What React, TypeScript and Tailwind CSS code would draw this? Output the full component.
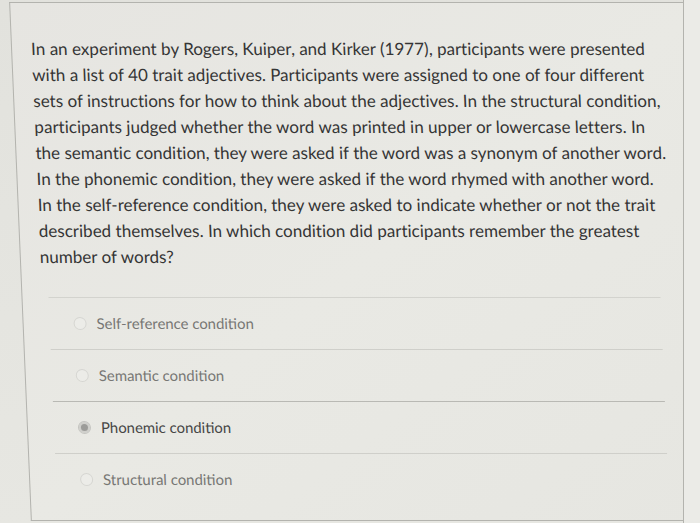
import React from "react";

const lines = [
  "In an experiment by Rogers, Kuiper, and Kirker (1977), participants were presented",
  "with a list of 40 trait adjectives. Participants were assigned to one of four different",
  "sets of instructions for how to think about the adjectives. In the structural condition,",
  "participants judged whether the word was printed in upper or lowercase letters. In",
  "the semantic condition, they were asked if the word was a synonym of another word.",
  "In the phonemic condition, they were asked if the word rhymed with another word.",
  "In the self-reference condition, they were asked to indicate whether or not the trait",
  "described themselves. In which condition did participants remember the greatest",
  "number of words?",
];

const options = [
  { label: "Self-reference condition", selected: false, line: "border-[#d3d3ce]" },
  { label: "Semantic condition", selected: false, line: "border-[#cfcfca]" },
  { label: "Phonemic condition", selected: true, line: "border-[#b9b9b4]" },
  { label: "Structural condition", selected: false, line: "border-[#cfcfca]" },
];

export default function App() {
  return (
    <div
      className="w-[700px] h-[523px] flex bg-[#e4e4df] overflow-hidden"
      style={{ fontFamily: "Lato, 'Open Sans', sans-serif" }}
    >
      <div className="flex-1 relative overflow-hidden bg-gradient-to-b from-[#e2e2dd] to-[#e7e7e2]">
        <div className="mt-[2px] ml-[20px] h-[519px] w-[700px] border-t border-l border-b border-[#b3b3ae] bg-gradient-to-br from-[#e6e5e1] via-[#e9e9e4] to-[#e6e6e1] skew-x-[2.4deg] pt-[33px]">
          <div className="pl-[19px] text-[17px] leading-[26px] text-[#353535] tracking-[0.02px]">
            {lines.map((l, i) => (
              <div key={i} className="whitespace-nowrap">
                {l}
              </div>
            ))}
          </div>
          <div className="mt-[27px] ml-[26px] w-[612px]">
            {options.map((o, i) => (
              <div
                key={i}
                className={`h-[52px] border-t ${o.line} flex items-center pl-[24px] gap-[10px]`}
              >
                {o.selected ? (
                  <span className="w-[13px] h-[13px] rounded-full border border-[#c4c4c0] bg-[#dcdcd8] flex items-center justify-center">
                    <span className="w-[7px] h-[7px] rounded-full bg-[#9c9c99] ring-2 ring-[#cfcfcb]" />
                  </span>
                ) : (
                  <span className="w-[13px] h-[13px] rounded-full border border-[#d6d6d2] bg-[#ececE8]" />
                )}
                <span
                  className={`text-[14.9px] ${o.selected ? "text-[#464646]" : "text-[#777774]"}`}
                >
                  {o.label}
                </span>
              </div>
            ))}
          </div>
        </div>
      </div>
      <div className="w-[17px] border-l border-[#b3b3ae] bg-[#ebebe7]" />
    </div>
  );
}
